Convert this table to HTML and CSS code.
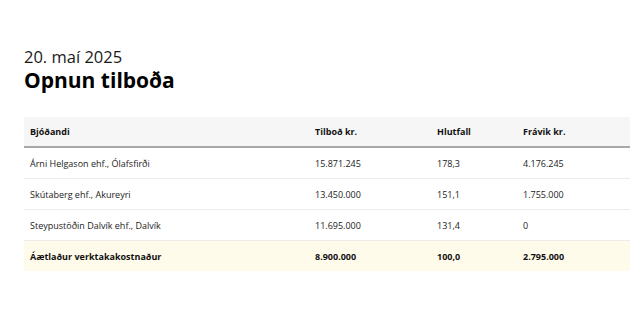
FILE: index.html
```html
<!DOCTYPE html>
<html lang="is">
<head>
<meta charset="utf-8">
<link rel="stylesheet" href="styles.css">
</head>
<body>
<main class="page">
  <p class="date">20. maí 2025</p>
  <h1 class="title">Opnun tilboða</h1>
  <table class="bids">
    <thead>
      <tr>
        <th class="c-name">Bjóðandi</th>
        <th class="c-bid">Tilboð kr.</th>
        <th class="c-pct">Hlutfall</th>
        <th class="c-dev">Frávik kr.</th>
      </tr>
    </thead>
    <tbody>
      <tr><td>Árni Helgason ehf., Ólafsfirði</td><td>15.871.245</td><td>178,3</td><td>4.176.245</td></tr>
      <tr><td>Skútaberg ehf., Akureyri</td><td>13.450.000</td><td>151,1</td><td>1.755.000</td></tr>
      <tr><td>Steypustöðin Dalvík ehf., Dalvík</td><td>11.695.000</td><td>131,4</td><td>0</td></tr>
      <tr class="total"><td>Áætlaður verktakakostnaður</td><td>8.900.000</td><td>100,0</td><td>2.795.000</td></tr>
    </tbody>
  </table>
</main>
</body>
</html>
```
FILE: styles.css
```css
html, body { margin: 0; padding: 0; background: #fff; }
body { font-family: "Open Sans", "Noto Sans", sans-serif; color: #111; }
.page { padding: 46px 10px 0 24px; }
.date { margin: 0; font-size: 16.5px; line-height: 22px; font-weight: 400; color: #1a1a1a; }
.title { margin: 0; font-size: 21px; line-height: 24px; font-weight: 700; color: #000; }
.bids { margin-top: 25px; width: 606px; border-collapse: collapse; font-size: 9px; }
.bids th, .bids td { text-align: left; padding: 0 6px; height: 30px; }
.bids thead th { background: #f6f6f6; font-weight: 700; height: 29px; border-bottom: 2px solid #a8a8a8; }
.bids tbody td { border-bottom: 1px solid #ececec; color: #222; }
.c-name { width: 273px; }
.c-bid { width: 110px; }
.c-pct { width: 74px; }
.bids tr.total td { background: #fffbea; font-weight: 700; color: #111; border-bottom: none; }
```
